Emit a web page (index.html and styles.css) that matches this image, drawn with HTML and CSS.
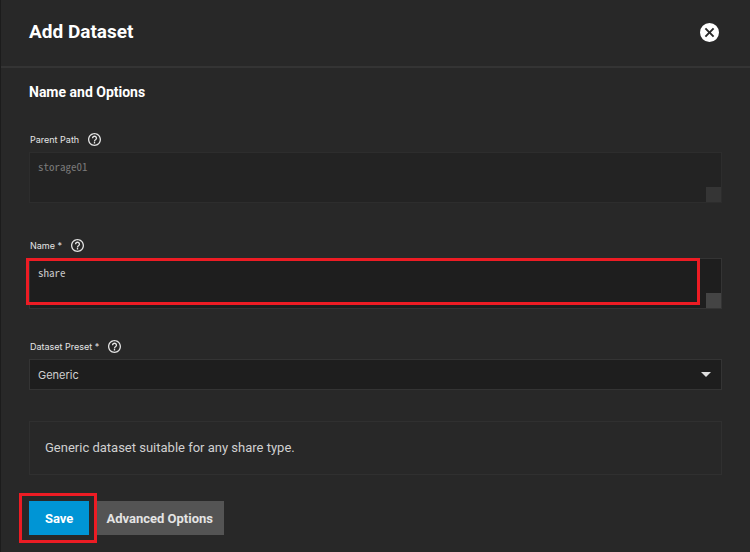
FILE: index.html
```
<!DOCTYPE html>
<html lang="en">
<head>
    <meta charset="UTF-8">
    <meta name="viewport" content="width=device-width, initial-scale=1.0">
    <title>Add Dataset</title>
    <link rel="stylesheet" href="styles.css">
</head>
<body>
    <!-- Panel Header -->
    <header class="panel-header">
        <h1>Add Dataset</h1>
        <button type="button" class="close-btn" aria-label="Close">
            <svg viewBox="2 2 20 20" width="19" height="19">
                <path fill="#fff" d="M12 2a10 10 0 1 0 0 20 10 10 0 0 0 0-20zm5 13.6L15.6 17 12 13.4 8.4 17 7 15.6l3.6-3.6L7 8.4 8.4 7l3.6 3.6L15.6 7 17 8.4 13.4 12z"/>
            </svg>
        </button>
    </header>

    <!-- Dataset Form -->
    <form class="dataset-form">
        <h2>Name and Options</h2>

        <div class="field field-text">
            <div class="field-label">
                <label for="parent">Parent Path</label>
                <button type="button" class="help-btn" aria-label="Help">
                    <svg viewBox="2 2 20 20" width="13" height="13">
                        <path fill="#e4e4e4" d="M11 18h2v-2h-2v2zm1-16C6.48 2 2 6.48 2 12s4.48 10 10 10 10-4.48 10-10S17.52 2 12 2zm0 18c-4.41 0-8-3.59-8-8s3.59-8 8-8 8 3.59 8 8-3.59 8-8 8zm0-14c-2.21 0-4 1.79-4 4h2c0-1.1.9-2 2-2s2 .9 2 2c0 2-3 1.75-3 5h2c0-2.25 3-2.5 3-5 0-2.21-1.79-4-4-4z"/>
                    </svg>
                </button>
            </div>
            <div class="text-box disabled">
                <textarea id="parent" disabled>storage01</textarea>
                <span class="grip"></span>
            </div>
        </div>

        <div class="field">
            <div class="field-label">
                <label for="name">Name *</label>
                <button type="button" class="help-btn" aria-label="Help">
                    <svg viewBox="2 2 20 20" width="13" height="13">
                        <path fill="#e4e4e4" d="M11 18h2v-2h-2v2zm1-16C6.48 2 2 6.48 2 12s4.48 10 10 10 10-4.48 10-10S17.52 2 12 2zm0 18c-4.41 0-8-3.59-8-8s3.59-8 8-8 8 3.59 8 8-3.59 8-8 8zm0-14c-2.21 0-4 1.79-4 4h2c0-1.1.9-2 2-2s2 .9 2 2c0 2-3 1.75-3 5h2c0-2.25 3-2.5 3-5 0-2.21-1.79-4-4-4z"/>
                    </svg>
                </button>
            </div>
            <div class="text-box">
                <textarea id="name" required>share</textarea>
                <span class="grip"></span>
                <span class="marker marker-name"></span>
            </div>
        </div>

        <div class="field">
            <div class="field-label">
                <label for="preset">Dataset Preset *</label>
                <button type="button" class="help-btn" aria-label="Help">
                    <svg viewBox="2 2 20 20" width="13" height="13">
                        <path fill="#e4e4e4" d="M11 18h2v-2h-2v2zm1-16C6.48 2 2 6.48 2 12s4.48 10 10 10 10-4.48 10-10S17.52 2 12 2zm0 18c-4.41 0-8-3.59-8-8s3.59-8 8-8 8 3.59 8 8-3.59 8-8 8zm0-14c-2.21 0-4 1.79-4 4h2c0-1.1.9-2 2-2s2 .9 2 2c0 2-3 1.75-3 5h2c0-2.25 3-2.5 3-5 0-2.21-1.79-4-4-4z"/>
                    </svg>
                </button>
            </div>
            <div class="select-box">
                <select id="preset">
                    <option>Generic</option>
                </select>
                <svg class="arrow" viewBox="0 0 10 5" width="10" height="5">
                    <path fill="#e0e0e0" d="M0 0h10L5 5z"/>
                </svg>
            </div>
        </div>

        <p class="preset-info">Generic dataset suitable for any share type.</p>

        <div class="actions">
            <div class="save-wrap">
                <button type="submit" class="btn btn-save">Save</button>
                <span class="marker marker-save"></span>
            </div>
            <button type="button" class="btn btn-advanced">Advanced Options</button>
        </div>
    </form>
</body>
</html>
```
FILE: styles.css
```
* {
    box-sizing: border-box;
}

body {
    margin: 0;
    min-height: 100vh;
    background-color: #282828;
    border-left: 1px solid #1c1c1c;
    color: #fff;
    font-family: Inter, Arial, sans-serif;
}

button {
    border: 0;
    padding: 0;
    background: none;
    cursor: pointer;
}

h1,
h2 {
    margin: 0;
    font-family: Roboto, Arial, sans-serif;
    font-weight: bold;
}

/* Panel Header */
.panel-header {
    display: flex;
    justify-content: space-between;
    align-items: center;
    padding: 20px 31px 22px 28px;
    border-bottom: 2px solid #343434;
}

h1 {
    font-size: 19px;
    line-height: 24px;
}

.close-btn,
.help-btn {
    display: flex;
}

/* Dataset Form */
.dataset-form {
    padding: 14px 28px 8px;
}

h2 {
    margin-bottom: 28px;
    font-size: 14px;
    line-height: 20px;
}

.field {
    margin-bottom: 28px;
}

.field-text {
    margin-bottom: 33px;
}

.field-label {
    display: flex;
    align-items: center;
    gap: 9px;
    height: 18px;
    margin-bottom: 4px;
    padding-left: 1px;
    color: #e4e4e4;
    font-size: 9px;
}

.text-box,
.select-box {
    position: relative;
    border: 1px solid #343434;
    background-color: #1e1e1e;
}

.text-box {
    height: 51px;
}

.text-box.disabled {
    border-color: #2d2d2d;
    background-color: #232323;
}

textarea {
    display: block;
    width: 100%;
    height: 100%;
    padding: 5px 8px;
    border: 0;
    outline: 0;
    resize: none;
    background: none;
    color: #c8c8c8;
    font: 11px/16px "Noto Sans Mono CJK JP", "Noto Sans CJK JP", sans-serif;
}

textarea:disabled {
    color: #7a7a7a;
}

.grip {
    position: absolute;
    right: 0;
    bottom: 0;
    width: 15px;
    height: 15px;
    background-color: #444;
}

.disabled .grip {
    background-color: #353535;
}

select {
    display: block;
    width: 100%;
    height: 29px;
    padding: 0 8px;
    border: 0;
    appearance: none;
    background: none;
    color: #d0d0d0;
    font: 11px Inter, Arial, sans-serif;
}

.arrow {
    position: absolute;
    top: 12px;
    right: 10px;
    pointer-events: none;
}

.preset-info {
    margin: 31px 0 26px;
    padding: 16px 15px;
    border: 1px solid #303030;
    color: #d0d0d0;
    font-family: Roboto, Arial, sans-serif;
    font-size: 13px;
    line-height: 20px;
}

/* Buttons */
.actions {
    display: flex;
    gap: 6px;
}

.save-wrap {
    position: relative;
}

.btn {
    height: 34px;
    font: bold 13px Roboto, Arial, sans-serif;
}

.btn-save {
    padding: 0 16px;
    background-color: #0095d5;
    color: #fff;
}

.btn-advanced {
    padding: 0 11px;
    background-color: #545454;
    color: #e4e4e4;
}

/* Red highlight frames */
.marker {
    position: absolute;
    border: 3px solid #ed1c24;
    pointer-events: none;
}

.marker-name {
    top: -1px;
    right: 21px;
    bottom: 3px;
    left: -4px;
}

.marker-save {
    top: -8px;
    right: -8px;
    bottom: -8px;
    left: -10px;
}
```
